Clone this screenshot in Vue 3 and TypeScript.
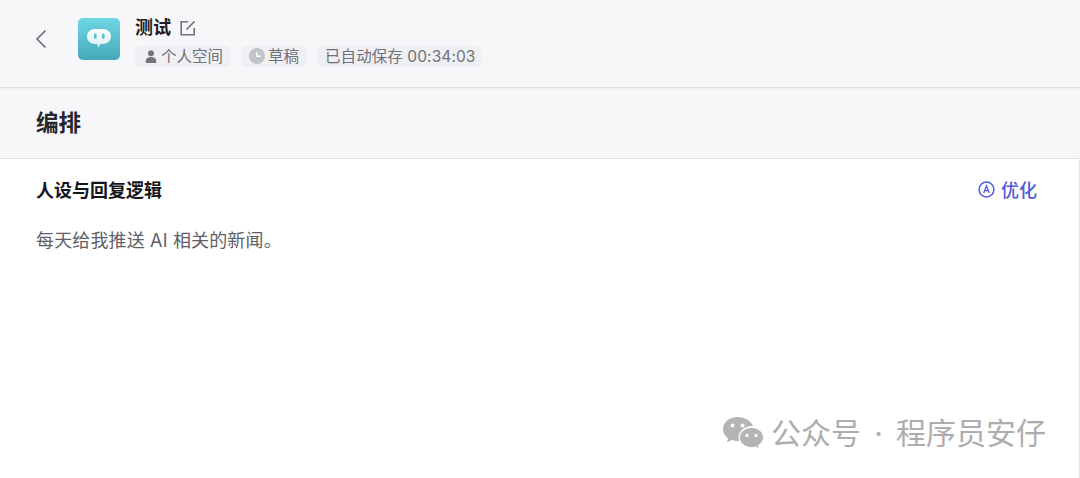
<script setup lang="ts">
const body = '每天给我推送 AI 相关的新闻。'
</script>

<template>
  <div class="page">
    <header class="topbar">
      <button class="back" aria-label="back">
        <svg width="14" height="20" viewBox="0 0 14 20" fill="none">
          <path d="M11.5 1.5 3 10l8.5 8.5" stroke="#6b6d75" stroke-width="1.6" />
        </svg>
      </button>
      <div class="logo">
        <svg width="26" height="24" viewBox="0 0 26 24">
          <defs>
            <linearGradient id="bubble" x1="0" y1="0" x2="0" y2="1">
              <stop offset="0" stop-color="#ffffff" />
              <stop offset="1" stop-color="#d5eef2" />
            </linearGradient>
          </defs>
          <path d="M10 2h6c5 0 9 2.600 9 7.500S21 17 16 17h-1.400L12 20.500 11.300 17H10c-5 0-9-2.600-9-7.500S5 2 10 2Z" fill="url(#bubble)" />
          <rect x="8" y="6.500" width="2.600" height="5.400" rx="1.300" fill="#5cbccb" />
          <rect x="16" y="6.500" width="2.600" height="5.400" rx="1.300" fill="#5cbccb" />
        </svg>
      </div>
      <div class="info">
        <div class="title-row">
          <span class="title">测试</span>
          <svg width="16" height="16" viewBox="0 0 16 16" fill="none" stroke="#73757c" stroke-width="1.600">
            <path d="M8 1.800H1.200v13h13V8" />
            <path d="M6.500 9.500 14.600 1.400" />
          </svg>
        </div>
        <div class="tags">
          <span class="tag first">
            <svg width="12" height="13" viewBox="0 0 12 13" fill="#73757c">
              <circle cx="6" cy="3.300" r="3" />
              <path d="M.8 13v-2.300C.8 8.400 2.800 7 6 7s5.200 1.400 5.200 3.700V13Z" />
            </svg>
            个人空间
          </span>
          <span class="tag draft">
            <svg width="16" height="16" viewBox="0 0 16 16">
              <circle cx="8" cy="8" r="8" fill="#c2c3c9" />
              <path d="M7.800 4v4.300h3.800" fill="none" stroke="#fff" stroke-width="1.400" />
            </svg>
            草稿
          </span>
          <span class="tag saved">已自动保存 00:34:03</span>
        </div>
      </div>
    </header>

    <div class="section-head">编排</div>

    <main class="panel">
      <div class="panel-head">
        <h2>人设与回复逻辑</h2>
        <button class="optimize">
          <svg width="17" height="17" viewBox="0 0 17 17" fill="none" stroke="#4f5bdc">
            <circle cx="8.500" cy="8.500" r="7.400" stroke-width="1.500" />
            <path d="M5.700 12 8.500 4.800l2.800 7.200M6.700 9.700h3.600" stroke-width="1.300" />
          </svg>
          优化
        </button>
      </div>
      <p class="body">{{ body }}</p>
    </main>

    <div class="watermark">
      <svg width="42" height="34" viewBox="0 0 42 34" fill="#b4b4b4">
        <path d="M15.500 1C7.400 1 1 6.400 1 13c0 3.700 2 7 5.200 9.300L5 26.500l4.700-2.500c1.900.6 3.800 1 5.800 1 .6 0 1.200 0 1.700-.1-.4-1.100-.6-2.200-.6-3.400 0-6.300 6-11.400 13.400-11.400h1C29.200 5 22.900 1 15.500 1Z" />
        <path d="M41.500 21.500c0-5.500-5.400-10-12-10s-12 4.500-12 10 5.400 10 12 10c1.400 0 2.800-.2 4-.6l3.800 2.100-1-3.400c3.200-1.900 5.200-4.800 5.200-8.100Z" stroke="#fff" stroke-width="1" />
        <circle cx="10.500" cy="9.500" r="2" fill="#fff" />
        <circle cx="20.500" cy="9.500" r="2" fill="#fff" />
        <circle cx="25" cy="19.500" r="1.700" fill="#fff" />
        <circle cx="34" cy="19.500" r="1.700" fill="#fff" />
      </svg>
      <span class="wm-text">公众号<span class="wm-dot">·</span>程序员安仔</span>
    </div>
  </div>
</template>

<style scoped>
.page {
  position: relative;
  width: 1080px;
  height: 478px;
  overflow: hidden;
  background: #f7f7fa;
  font-family: Inter, "Liberation Sans", "Noto Sans CJK SC", sans-serif;
  display: flex;
  flex-direction: column;
}

.topbar {
  height: 88px;
  flex-shrink: 0;
  box-sizing: border-box;
  border-bottom: 1px solid #e2e2e6;
  box-shadow: 0 1px 2px rgba(0, 0, 0, 0.04);
  display: flex;
  align-items: flex-start;
  padding: 18px 0 0 34px;
}

.back {
  width: 14px;
  height: 20px;
  margin-top: 11px;
  padding: 0;
  border: 0;
  background: none;
  display: flex;
}

.logo {
  width: 42px;
  height: 42px;
  margin-left: 30px;
  border-radius: 5px;
  background: linear-gradient(180deg, #6fd6e4 0%, #45a9ba 100%);
  display: flex;
  align-items: center;
  justify-content: center;
}

.info {
  margin-left: 15px;
  display: flex;
  flex-direction: column;
}

.title-row {
  display: flex;
  align-items: center;
  gap: 9px;
  height: 20px;
}

.title {
  font-size: 18px;
  line-height: 20px;
  font-weight: 600;
  color: #1c1d23;
}

.tags {
  display: flex;
  gap: 10px;
  margin-top: 7.5px;
}

.tag {
  height: 21px;
  box-sizing: border-box;
  padding: 0 8px;
  border-radius: 5px;
  background: #f0f0f4;
  color: #6f7178;
  font-size: 15.5px;
  line-height: 21px;
  display: flex;
  align-items: center;
  gap: 4px;
  white-space: nowrap;
}

.tag.first {
  padding-left: 10px;
}

.tag.draft {
  gap: 3px;
}

.tag.saved {
  padding: 0 7px 0 8px;
  letter-spacing: 0.08px;
}

.section-head {
  height: 71px;
  flex-shrink: 0;
  box-sizing: border-box;
  border-bottom: 1px solid #e2e2e6;
  padding-left: 36px;
  font-size: 22.5px;
  font-weight: 600;
  line-height: 69px;
  color: #26272d;
}

.panel {
  flex: 1;
  background: #fff;
  border-right: 1px solid #e6e6ea;
  padding: 0 42px 0 36px;
}

.panel-head {
  display: flex;
  align-items: center;
  justify-content: space-between;
  height: 60px;
}

.panel-head h2 {
  margin: 0;
  font-size: 18px;
  font-weight: 600;
  color: #15161b;
}

.optimize {
  display: flex;
  align-items: center;
  gap: 6px;
  padding: 0;
  border: 0;
  background: none;
  color: #4f5bdc;
  font: inherit;
  font-size: 18px;
  font-weight: 500;
}

.body {
  margin: 10px 0 0;
  font-size: 18px;
  line-height: 24px;
  letter-spacing: 0.15px;
  color: #5f6067;
}

.watermark {
  position: absolute;
  left: 722px;
  top: 416px;
  display: flex;
  align-items: center;
  gap: 7px;
  color: #adadad;
  font-size: 30px;
  line-height: 34px;
  white-space: nowrap;
}

.wm-text {
  display: flex;
}

.wm-dot {
  width: 35px;
  text-align: center;
}
</style>
